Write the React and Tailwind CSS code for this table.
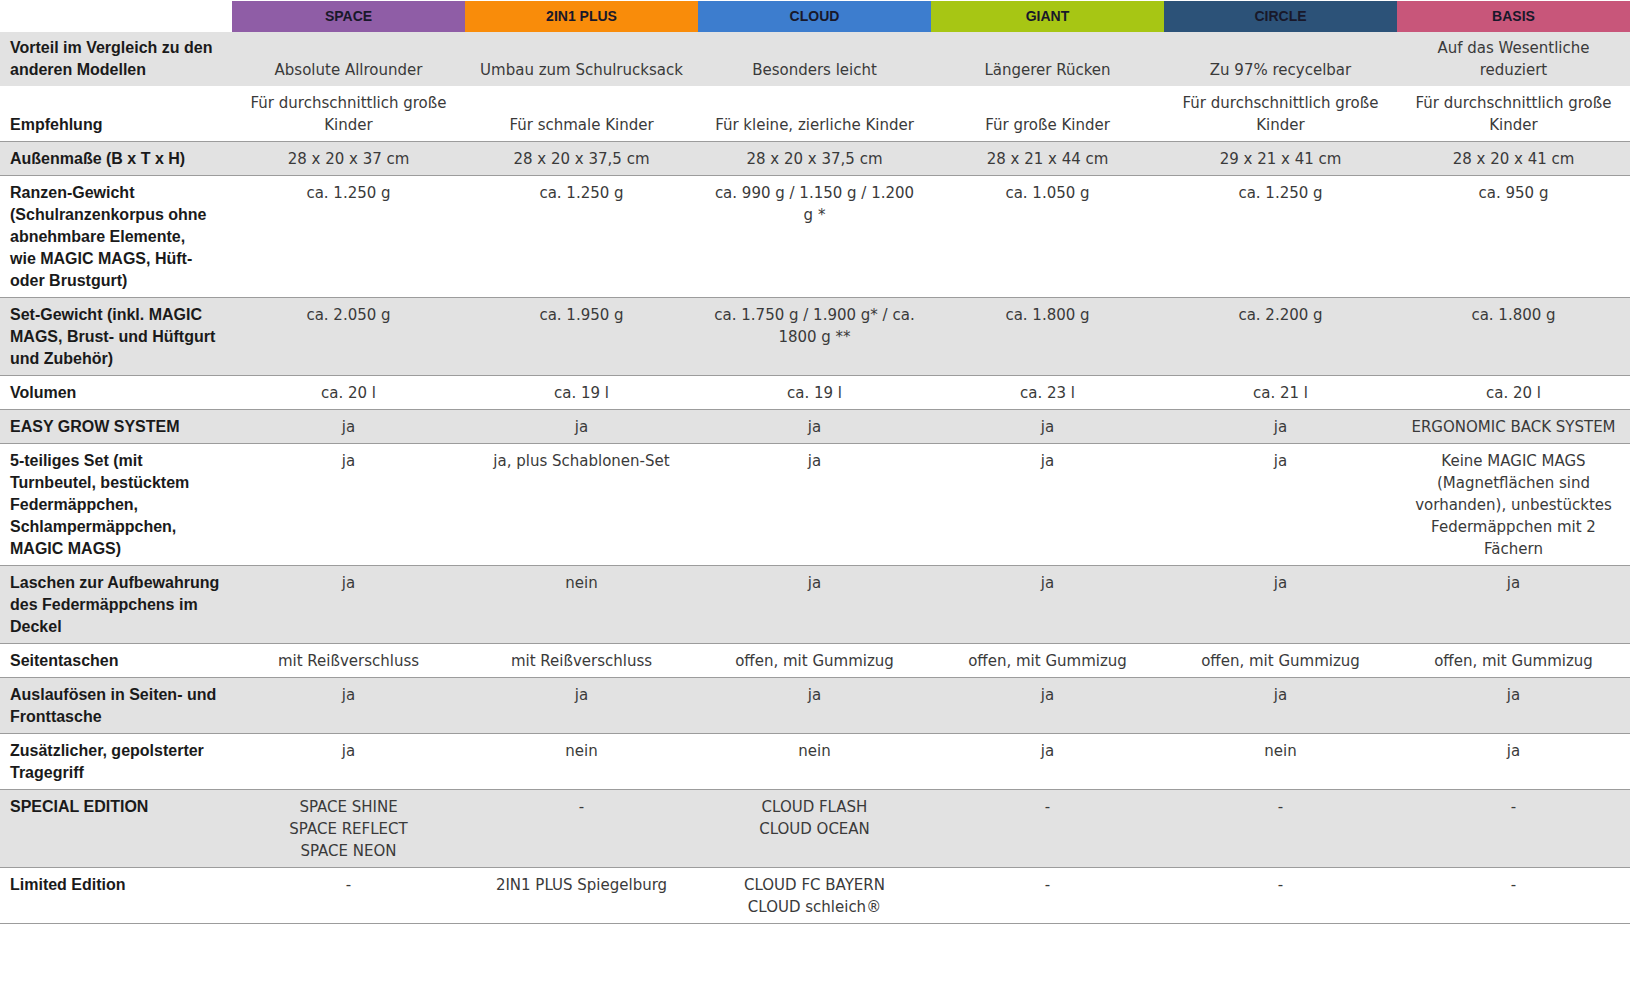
const models = [
  { name: "SPACE", color: "bg-[#8f5da6]" },
  { name: "2IN1 PLUS", color: "bg-[#f98c0a]" },
  { name: "CLOUD", color: "bg-[#3d7dce]" },
  { name: "GIANT", color: "bg-[#a7c614]" },
  { name: "CIRCLE", color: "bg-[#2c5278]" },
  { name: "BASIS", color: "bg-[#c8567a]" },
];

// each cell is a list of lines, so the wraps match the original table
const rows = [
  {
    label: ["Vorteil im Vergleich zu den", "anderen Modellen"],
    bottom: true,
    values: [
      ["Absolute Allrounder"],
      ["Umbau zum Schulrucksack"],
      ["Besonders leicht"],
      ["Längerer Rücken"],
      ["Zu 97% recycelbar"],
      ["Auf das Wesentliche", "reduziert"],
    ],
  },
  {
    label: ["Empfehlung"],
    bottom: true,
    values: [
      ["Für durchschnittlich große", "Kinder"],
      ["Für schmale Kinder"],
      ["Für kleine, zierliche Kinder"],
      ["Für große Kinder"],
      ["Für durchschnittlich große", "Kinder"],
      ["Für durchschnittlich große", "Kinder"],
    ],
  },
  {
    label: ["Außenmaße (B x T x H)"],
    values: [
      ["28 x 20 x 37 cm"],
      ["28 x 20 x 37,5 cm"],
      ["28 x 20 x 37,5 cm"],
      ["28 x 21 x 44 cm"],
      ["29 x 21 x 41 cm"],
      ["28 x 20 x 41 cm"],
    ],
  },
  {
    label: [
      "Ranzen-Gewicht",
      "(Schulranzenkorpus ohne",
      "abnehmbare Elemente,",
      "wie MAGIC MAGS, Hüft-",
      "oder Brustgurt)",
    ],
    values: [
      ["ca. 1.250 g"],
      ["ca. 1.250 g"],
      ["ca. 990 g / 1.150 g / 1.200", "g *"],
      ["ca. 1.050 g"],
      ["ca. 1.250 g"],
      ["ca. 950 g"],
    ],
  },
  {
    label: ["Set-Gewicht (inkl. MAGIC", "MAGS, Brust- und Hüftgurt", "und Zubehör)"],
    values: [
      ["ca. 2.050 g"],
      ["ca. 1.950 g"],
      ["ca. 1.750 g / 1.900 g* / ca.", "1800 g **"],
      ["ca. 1.800 g"],
      ["ca. 2.200 g"],
      ["ca. 1.800 g"],
    ],
  },
  {
    label: ["Volumen"],
    values: [["ca. 20 l"], ["ca. 19 l"], ["ca. 19 l"], ["ca. 23 l"], ["ca. 21 l"], ["ca. 20 l"]],
  },
  {
    label: ["EASY GROW SYSTEM"],
    values: [["ja"], ["ja"], ["ja"], ["ja"], ["ja"], ["ERGONOMIC BACK SYSTEM"]],
  },
  {
    label: [
      "5-teiliges Set (mit",
      "Turnbeutel, bestücktem",
      "Federmäppchen,",
      "Schlampermäppchen,",
      "MAGIC MAGS)",
    ],
    values: [
      ["ja"],
      ["ja, plus Schablonen-Set"],
      ["ja"],
      ["ja"],
      ["ja"],
      [
        "Keine MAGIC MAGS",
        "(Magnetflächen sind",
        "vorhanden), unbestücktes",
        "Federmäppchen mit 2",
        "Fächern",
      ],
    ],
  },
  {
    label: ["Laschen zur Aufbewahrung", "des Federmäppchens im", "Deckel"],
    values: [["ja"], ["nein"], ["ja"], ["ja"], ["ja"], ["ja"]],
  },
  {
    label: ["Seitentaschen"],
    values: [
      ["mit Reißverschluss"],
      ["mit Reißverschluss"],
      ["offen, mit Gummizug"],
      ["offen, mit Gummizug"],
      ["offen, mit Gummizug"],
      ["offen, mit Gummizug"],
    ],
  },
  {
    label: ["Auslaufösen in Seiten- und", "Fronttasche"],
    values: [["ja"], ["ja"], ["ja"], ["ja"], ["ja"], ["ja"]],
  },
  {
    label: ["Zusätzlicher, gepolsterter", "Tragegriff"],
    values: [["ja"], ["nein"], ["nein"], ["ja"], ["nein"], ["ja"]],
  },
  {
    label: ["SPECIAL EDITION"],
    values: [
      ["SPACE SHINE", "SPACE REFLECT", "SPACE NEON"],
      ["-"],
      ["CLOUD FLASH", "CLOUD OCEAN"],
      ["-"],
      ["-"],
      ["-"],
    ],
  },
  {
    label: ["Limited Edition"],
    values: [
      ["-"],
      ["2IN1 PLUS Spiegelburg"],
      ["CLOUD FC BAYERN", "CLOUD schleich®"],
      ["-"],
      ["-"],
      ["-"],
    ],
  },
];

const Lines = ({ lines }) =>
  lines.map((line, i) => (
    <div key={i} className="whitespace-nowrap">
      {line}
    </div>
  ));

const App = () => {
  return (
    <div className="w-[1630px] h-[1002px] bg-white pt-px overflow-hidden">
      <table className="w-[1630px] table-fixed border-collapse">
        <colgroup>
          <col className="w-[232px]" />
          {models.map((m) => (
            <col key={m.name} className="w-[233px]" />
          ))}
        </colgroup>
        <thead>
          <tr>
            <th className="h-[31px] p-0 bg-white"></th>
            {models.map((m) => (
              <th
                key={m.name}
                className={`h-[31px] p-0 text-center align-middle text-[14px] font-bold text-[#18182a] font-['Liberation_Sans',sans-serif] ${m.color}`}
              >
                {m.name}
              </th>
            ))}
          </tr>
        </thead>
        <tbody>
          {rows.map((row, r) => {
            const pad = r === 0 ? "pt-[5px] pb-[5px]" : "pt-[6px] pb-[5px]";
            const line = r > 0 ? "border-b border-[#9c9c9c]" : "";
            const valign = row.bottom ? "align-bottom" : "align-top";
            return (
              <tr key={r} className={r % 2 === 0 ? "bg-[#e2e2e2]" : "bg-white"}>
                <td
                  className={`pl-[10px] pr-[8px] ${pad} leading-[22px] text-[16px] font-bold text-[#1a1a1a] font-['Liberation_Sans',sans-serif] ${valign} ${line}`}
                >
                  <Lines lines={row.label} />
                </td>
                {row.values.map((v, c) => (
                  <td
                    key={c}
                    className={`px-[6px] ${pad} text-center leading-[22px] text-[15px] text-[#3a3a3a] font-['DejaVu_Sans',sans-serif] ${valign} ${line}`}
                  >
                    <Lines lines={v} />
                  </td>
                ))}
              </tr>
            );
          })}
        </tbody>
      </table>
    </div>
  );
};

export default App;
